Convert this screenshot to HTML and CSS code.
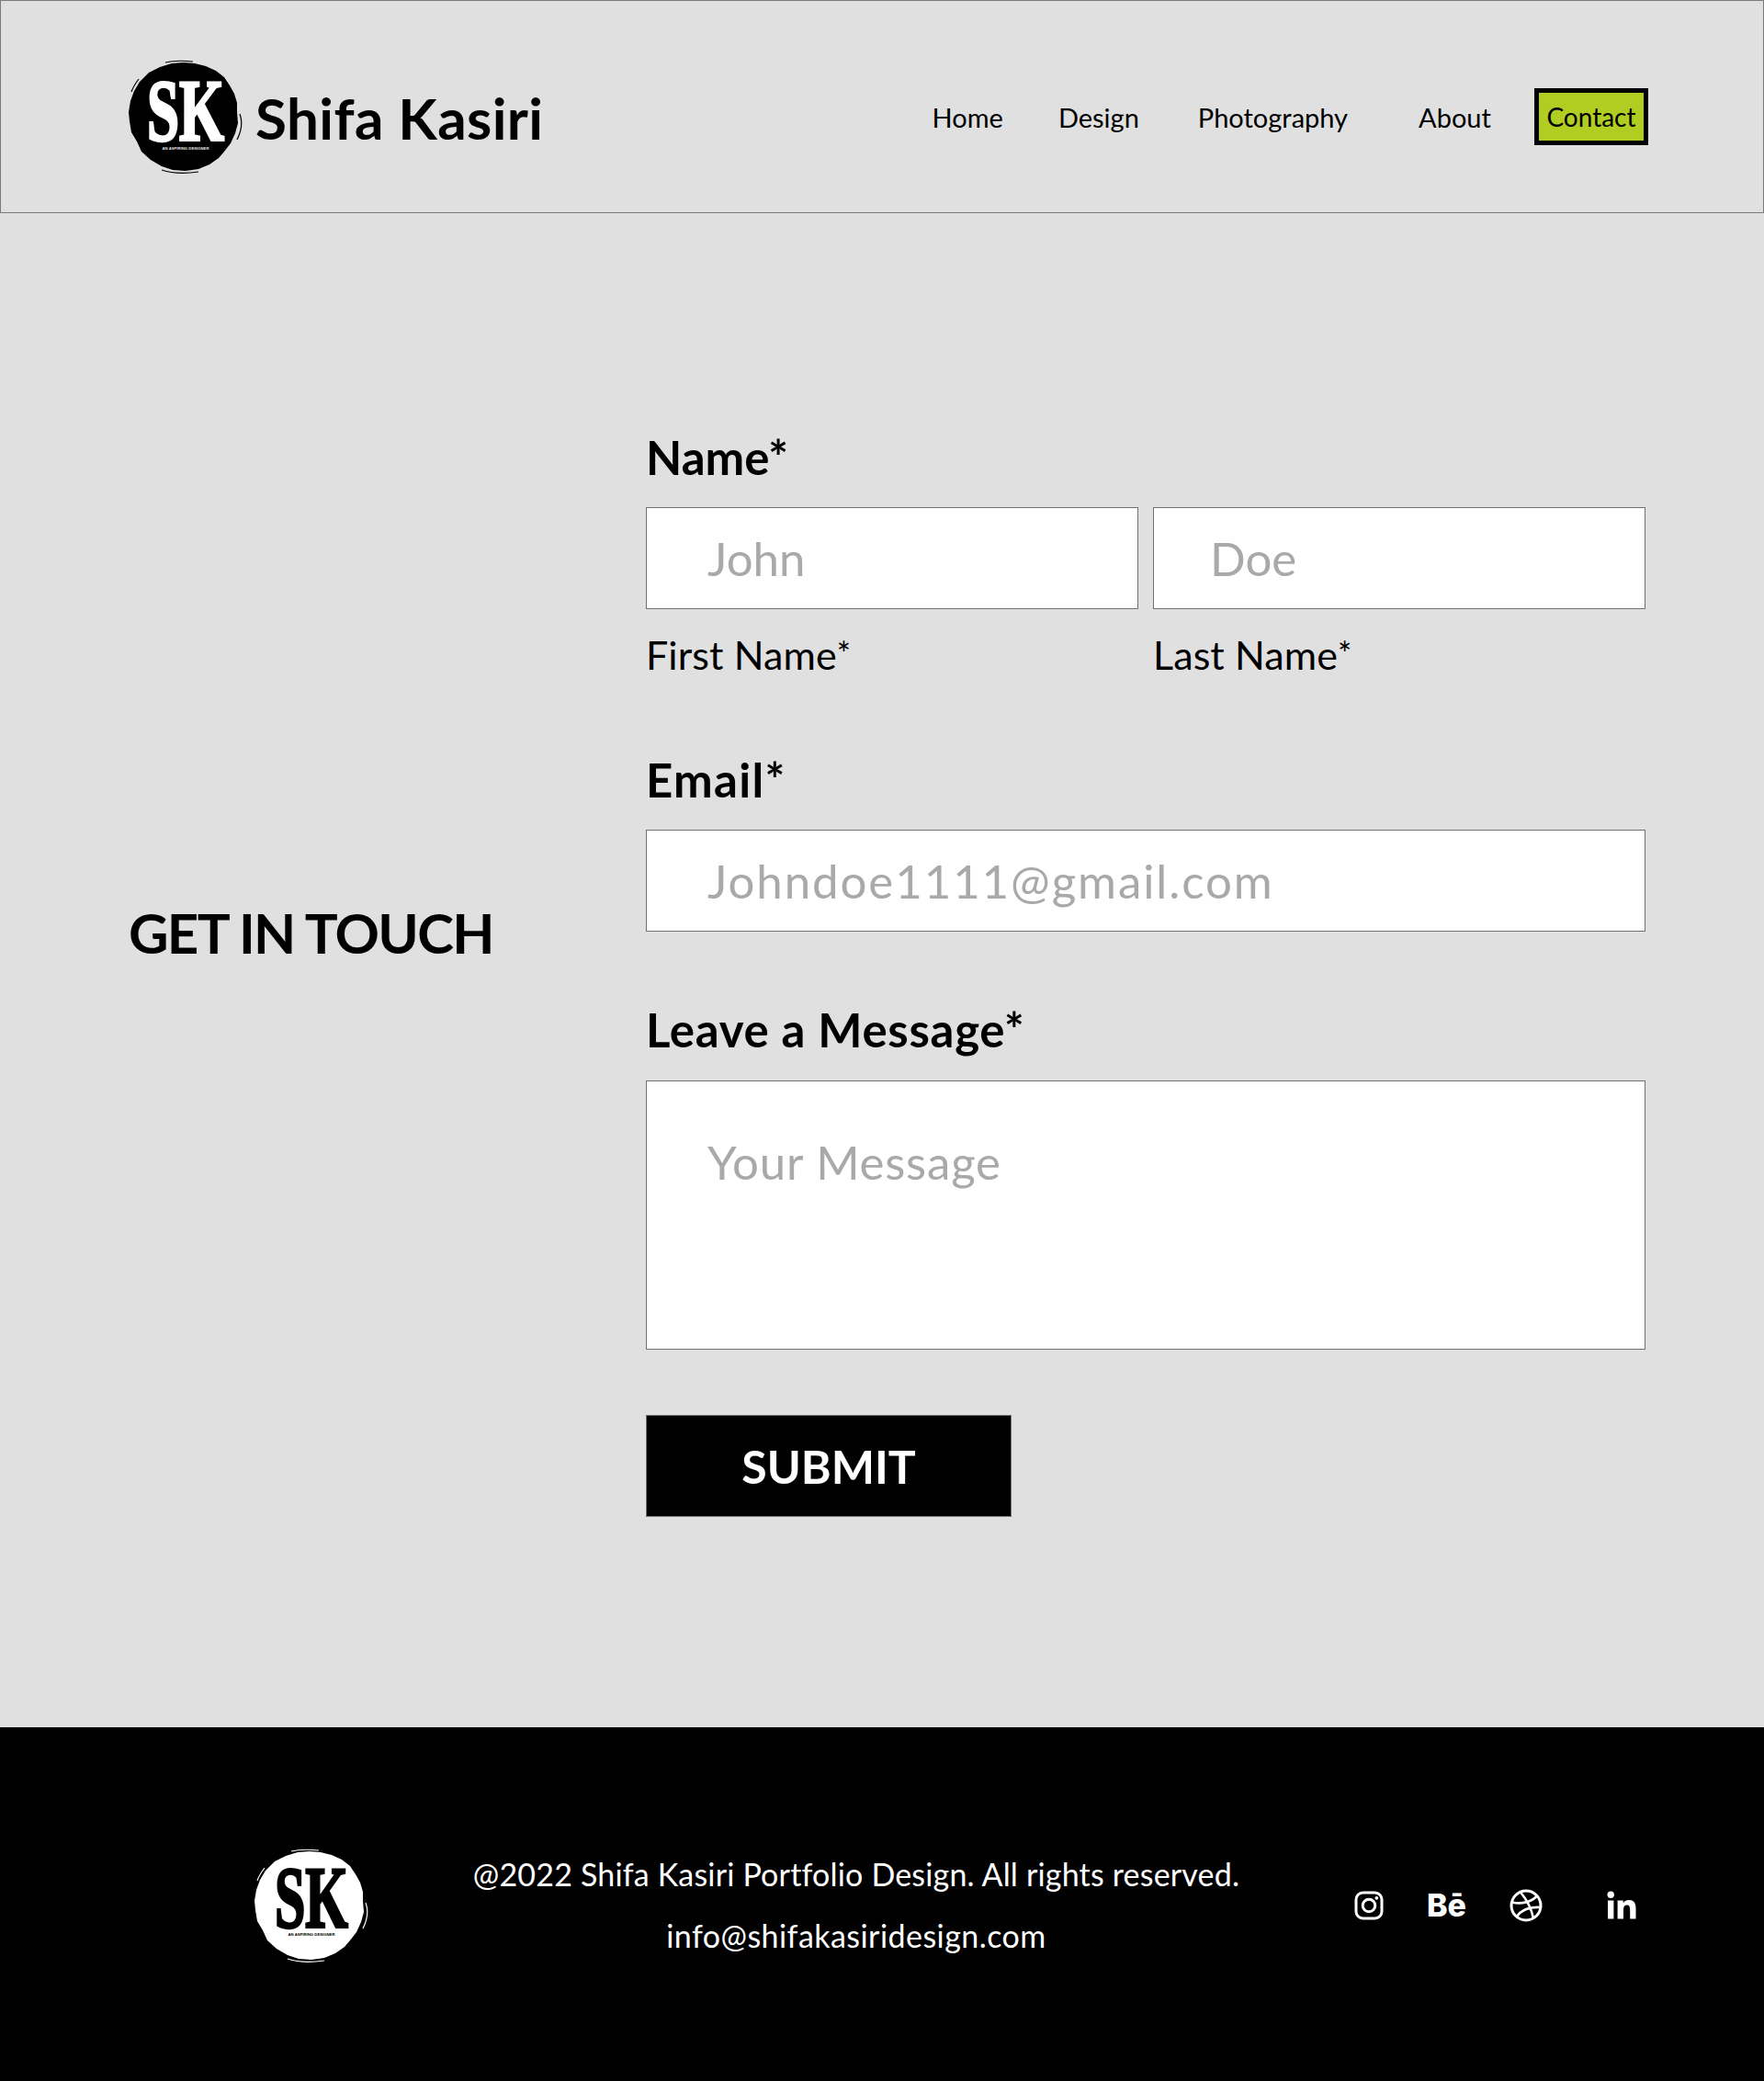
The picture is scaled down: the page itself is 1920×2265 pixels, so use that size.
FILE: index.html
```html
<!DOCTYPE html>
<html lang="en">
<head>
	<meta charset="UTF-8">
	<title>Shifa Kasiri - Contact</title>
	<link rel="stylesheet" href="styles.css">
</head>
<body>
	<header class="top">
		<a class="brand">
			<svg class="logo" viewBox="0 0 125 125">
				<path class="blob" d="M60 2 L72 3 L84 6 L95 11 L104 18 L110 27 L115 36 L118 46 L118 56 L119 68 L116 79 L111 90 L104 99 L98 106 L88 113 L76 118 L62 120 L48 119 L36 115 L24 108 L14 99 L9 88 L3 78 L1 66 L0 56 L2 44 L6 33 L12 23 L22 13 L34 7 L47 3 Z"/>
				<path class="scratch" d="M121 58 C124 66 123 76 118 86 M36 119 C48 123 62 123 76 121 M40 2 C48 0 60 0 70 1 M3 34 C5 28 8 24 11 20"/>
				<text class="sk" x="62" y="87" textLength="84" lengthAdjust="spacingAndGlyphs">SK</text>
				<text class="tag" x="62" y="97" textLength="51" lengthAdjust="spacingAndGlyphs">AN ASPIRING DESIGNER</text>
			</svg>
			<span class="brand-name">Shifa Kasiri</span>
		</a>
		<nav class="menu">
			<a class="home">Home</a>
			<a class="design">Design</a>
			<a class="photo">Photography</a>
			<a class="about">About</a>
			<a class="contact">Contact</a>
		</nav>
	</header>

	<main class="page">
		<h1 class="touch">GET IN TOUCH</h1>
		<form class="form">
			<div class="label">Name*</div>
			<div class="pair">
				<div>
					<div class="field"><span class="hint">John</span></div>
					<div class="sublabel">First Name<sup>*</sup></div>
				</div>
				<div>
					<div class="field second"><span class="hint">Doe</span></div>
					<div class="sublabel">Last Name<sup>*</sup></div>
				</div>
			</div>
			<div class="label email-label">Email*</div>
			<div class="field wide"><span class="hint email-hint">Johndoe1111@gmail.com</span></div>
			<div class="label message-label">Leave a Message*</div>
			<div class="field message"><span class="hint message-hint">Your Message</span></div>
			<div class="submit">SUBMIT</div>
		</form>
	</main>

	<footer class="bottom">
		<svg class="logo footer-logo" viewBox="0 0 125 125">
			<path class="blob" d="M60 2 L72 3 L84 6 L95 11 L104 18 L110 27 L115 36 L118 46 L118 56 L119 68 L116 79 L111 90 L104 99 L98 106 L88 113 L76 118 L62 120 L48 119 L36 115 L24 108 L14 99 L9 88 L3 78 L1 66 L0 56 L2 44 L6 33 L12 23 L22 13 L34 7 L47 3 Z"/>
			<path class="scratch" d="M121 58 C124 66 123 76 118 86 M36 119 C48 123 62 123 76 121 M40 2 C48 0 60 0 70 1 M3 34 C5 28 8 24 11 20"/>
			<text class="sk" x="62" y="85" textLength="80" lengthAdjust="spacingAndGlyphs">SK</text>
			<text class="tag" x="62" y="94" textLength="51" lengthAdjust="spacingAndGlyphs">AN ASPIRING DESIGNER</text>
		</svg>
		<div class="rights">
			<p class="line-one">@2022 Shifa Kasiri Portfolio Design. All rights reserved.</p>
			<p class="line-two">info@shifakasiridesign.com</p>
		</div>
		<div class="social">
			<svg class="ico" viewBox="0 0 32 32">
				<rect class="line" x="2" y="2" width="28" height="28" rx="7.5"/>
				<circle class="line" cx="16" cy="16" r="6.8"/>
				<circle class="dot" cx="24.4" cy="7.8" r="1.9"/>
			</svg>
			<span class="be">Bē</span>
			<svg class="ico ball" viewBox="0 0 36 36">
				<circle class="line" cx="18" cy="18" r="16"/>
				<path class="line thin" d="M12 3.5 C19 12 24 22 26 32 M3 14.5 C13 17 24 14 30 7.5 M8 30 C12 24 20 19 34 20"/>
			</svg>
			<svg class="ico linkedin" viewBox="0 0 32 32">
				<circle class="dot" cx="4.2" cy="4.2" r="3.7"/>
				<rect class="dot" x="1" y="10.5" width="6.4" height="20"/>
				<path class="dot" d="M11.6 10.5 H17.7 V13.3 C19 11.3 21 10 23.8 10 C29.4 10 31.5 13.5 31.5 19 V30.5 H25.2 V20.4 C25.2 17.8 24.6 15.5 21.9 15.5 C19.1 15.5 18 17.5 18 20.4 V30.5 H11.6 Z"/>
			</svg>
		</div>
	</footer>
</body>
</html>
```

FILE: styles.css
```css
* {
	box-sizing: border-box;
}
body {
	margin: 0;
	background: #e0e0e0;
	color: #000;
	font-family: "Lato", "Open Sans", sans-serif;
}
/* top bar */
.top {
	height: 232px;
	border: 1px solid #7b7b7b;
	padding: 22px 125px 0 139px;
	display: flex;
	justify-content: space-between;
	align-items: center;
}
.brand {
	display: flex;
	align-items: center;
	gap: 13px;
	margin-top: 2px;
}
.logo {
	width: 125px;
	height: 125px;
	flex: none;
	overflow: visible;
}
.blob {
	fill: #000;
}
.scratch {
	fill: none;
	stroke: #000;
	stroke-width: 1.2;
}
.sk {
	fill: #fff;
	stroke: #fff;
	stroke-width: 3;
	font: bold 96px "Liberation Serif", serif;
	text-anchor: middle;
}
.tag {
	fill: #e0e0e0;
	font: bold 4px "Liberation Sans", sans-serif;
	text-anchor: middle;
}
.brand-name {
	font-size: 62px;
	font-weight: 700;
	letter-spacing: 0.4px;
}
.menu {
	display: flex;
	align-items: center;
	font-size: 29px;
}
.home { margin-right: 60px; }
.design { margin-right: 64px; }
.photo { margin-right: 77px; }
.about { margin-right: 47px; }
.contact {
	height: 62px;
	padding: 0 8.5px;
	border: 5px solid #000;
	background: #b1cd22;
	font-size: 28px;
	display: flex;
	align-items: center;
}
/* form */
.page {
	height: 1648px;
	padding: 235px 0 0 140px;
	display: grid;
	grid-template-columns: 563px 1088px;
	align-items: start;
}
.touch {
	margin: 0;
	padding-top: 510px;
	font-size: 60px;
	letter-spacing: -1.7px;
	line-height: 76px;
	font-weight: 700;
}
.label {
	font-size: 51px;
	line-height: 62px;
	font-weight: 700;
	margin-bottom: 23px;
}
.email-label { letter-spacing: 1.3px; }
.message-label {
	letter-spacing: 0.7px;
	margin-bottom: 24px;
}
.pair {
	display: grid;
	grid-template-columns: 536px 536px;
	gap: 16px;
	margin-bottom: 79px;
}
.field {
	height: 111px;
	padding: 0 66px;
	background: #fff;
	border: 1px solid #707070;
	display: flex;
	align-items: center;
	margin-bottom: 24px;
}
.second {
	padding-left: 61px;
}
.wide {
	margin-bottom: 76px;
}
.hint {
	color: #a9a9a9;
	font-size: 51px;
}
.email-hint { letter-spacing: 1.9px; }
.message-hint { letter-spacing: 0.8px; }
.message {
	height: 293px;
	padding-top: 57px;
	align-items: flex-start;
	margin-bottom: 71px;
}
.sublabel {
	font-size: 43px;
	line-height: 52px;
	letter-spacing: 0.1px;
}
.sublabel sup {
	font-size: 36px;
	line-height: 0;
	vertical-align: 4px;
}
.submit {
	width: 398px;
	height: 111px;
	background: #000;
	border: 1px solid #707070;
	color: #fff;
	font-size: 50px;
	font-weight: 700;
	display: flex;
	align-items: center;
	justify-content: center;
}
/* footer */
.bottom {
	height: 385px;
	background: #000;
	color: #fff;
	padding: 0 125px 0 277px;
	display: flex;
	align-items: center;
}
.footer-logo {
	margin-top: 6px;
}
.footer-logo .blob { fill: #fff; }
.footer-logo .scratch { stroke: #fff; }
.footer-logo .sk { fill: #000; stroke: #000; }
.footer-logo .tag { fill: #000; }
.rights {
	width: 1060px;
	text-align: center;
	font-size: 34px;
}
.rights p {
	margin: 0 0 24px;
	line-height: 43px;
}
.rights .line-one { letter-spacing: 0.18px; }
.rights .line-two { letter-spacing: 0.45px; margin-bottom: 0; }
.social {
	display: flex;
	align-items: center;
	flex: 1;
	margin: 2px -20px 0 12px;
}
.ico {
	width: 32px;
	height: 32px;
}
.line {
	fill: none;
	stroke: #fff;
	stroke-width: 3;
}
.thin {
	stroke-width: 2.6;
}
.dot {
	fill: #fff;
}
.be {
	margin-left: 47px;
	font: 800 34px "Inter", sans-serif;
}
.ball {
	width: 36px;
	height: 36px;
	margin-left: 47px;
}
.linkedin {
	margin-left: 70px;
}
```
